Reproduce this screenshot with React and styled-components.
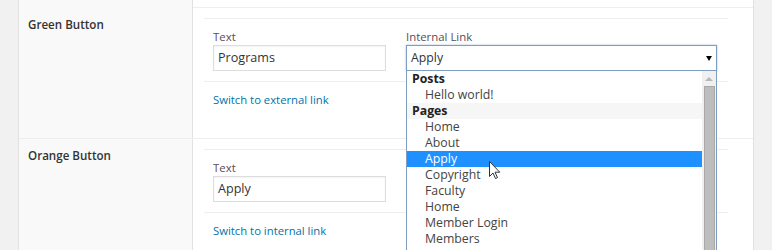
import React from "react";
import styled, { createGlobalStyle } from "styled-components";

const GlobalStyle = createGlobalStyle`
  body {
    margin: 0;
    background: #f1f1f1;
    font-family: "Open Sans", "Liberation Sans", sans-serif;
    color: #444;
  }
`;

const Page = styled.div`
  width: 772px;
  height: 250px;
  overflow: hidden;
  padding: 0 18px;
  box-sizing: border-box;
  position: relative;
`;

const Table = styled.div`
  background: #fff;
  border-left: 1px solid #e1e1e1;
  border-right: 1px solid #e1e1e1;
`;

const Row = styled.div`
  display: grid;
  grid-template-columns: 174px 1fr;
  border-bottom: 1px solid #eee;
  height: ${props => props.height || "auto"};
`;

const RowLabel = styled.div`
  background: #f9f9f9;
  border-right: 1px solid #e1e1e1;
  padding: 8px 9px;
  font-size: 11.6px;
  font-weight: 600;
  line-height: 18px;
  color: #333;
`;

const RowBody = styled.div`
  padding: 10px 25px 20px 11px;
`;

const Fields = styled.div`
  display: flex;
  gap: 2px;
  border-top: 1px solid #eee;
  border-bottom: 1px solid #eee;
`;

const Field = styled.div`
  width: ${props => props.width}px;
  padding: 10px 9px;
  box-sizing: border-box;
  position: relative;
`;

const FieldLabel = styled.div`
  font-size: 11.4px;
  line-height: 16px;
  color: #5a4d57;
`;

const TextInput = styled.div`
  height: 26px;
  box-sizing: border-box;
  border: 1px solid #ddd;
  box-shadow: inset 0 1px 2px rgba(0, 0, 0, 0.05);
  padding: 0 4px;
  font-size: 12.6px;
  line-height: 24px;
  color: #333;
`;

const SelectBox = styled(TextInput)`
  position: relative;
  font-size: 12.3px;
  border-color: #7e9ebf;
  box-shadow: 0 0 2px rgba(91, 157, 217, 0.6);
`;

const SelectArrow = styled.span`
  position: absolute;
  right: 4px;
  top: 10px;
  width: 0;
  height: 0;
  border-left: 3px solid transparent;
  border-right: 3px solid transparent;
  border-top: 5px solid #000;
`;

const LinkRow = styled.div`
  padding: 10px 9px;
  font-size: 11.3px;
  line-height: 16px;
  color: #0073aa;
`;

const Dropdown = styled.div`
  position: absolute;
  left: 9px;
  top: 51px;
  width: 311px;
  height: 200px;
  box-sizing: border-box;
  border: 1px solid #7e9ebf;
  border-bottom: none;
  background: #fff;
  display: flex;
  z-index: 2;
`;

const Options = styled.div`
  flex: 1;
`;

const Option = styled.div`
  height: 16px;
  line-height: 16px;
  font-size: 12.3px;
  padding-left: ${props => (props.group ? "5px" : "18px")};
  font-weight: ${props => (props.group ? 700 : 400)};
  color: ${props => (props.selected ? "#fff" : props.group ? "#222" : "#444")};
  background: ${props =>
    props.selected ? "#1e90ff" : props.shaded ? "#f6f6f6" : "transparent"};
  white-space: nowrap;
`;

const Scrollbar = styled.div`
  width: 14px;
  background: #f0f0f0;
  display: flex;
  flex-direction: column;
  align-items: center;
`;

const ScrollUp = styled.span`
  margin-top: 6px;
  width: 0;
  height: 0;
  border-left: 4px solid transparent;
  border-right: 4px solid transparent;
  border-bottom: 4px solid #b8b8b8;
`;

const ScrollThumb = styled.div`
  margin-top: 5px;
  width: 11px;
  flex: 1;
  box-sizing: border-box;
  background: #bdbdbd;
  border: 1px solid #a9a9a9;
`;

const Cursor = styled.svg`
  position: absolute;
  left: 489px;
  top: 161px;
  z-index: 3;
`;

const options = [
  { label: "Posts", group: true },
  { label: "Hello world!" },
  { label: "Pages", group: true, shaded: true },
  { label: "Home" },
  { label: "About" },
  { label: "Apply", selected: true },
  { label: "Copyright" },
  { label: "Faculty" },
  { label: "Home" },
  { label: "Member Login" },
  { label: "Members" }
];

const App = () => (
  <Page>
    <GlobalStyle />
    <Table>
      <Row height="7px">
        <RowLabel />
        <div />
      </Row>
      <Row>
        <RowLabel>Green Button</RowLabel>
        <RowBody>
          <Fields>
            <Field width={191}>
              <FieldLabel>Text</FieldLabel>
              <TextInput>Programs</TextInput>
            </Field>
            <Field width={329}>
              <FieldLabel>Internal Link</FieldLabel>
              <SelectBox>
                Apply
                <SelectArrow />
              </SelectBox>
              <Dropdown>
                <Options>
                  {options.map((o, i) => (
                    <Option
                      key={i}
                      group={o.group}
                      shaded={o.shaded}
                      selected={o.selected}
                    >
                      {o.label}
                    </Option>
                  ))}
                </Options>
                <Scrollbar>
                  <ScrollUp />
                  <ScrollThumb />
                </Scrollbar>
              </Dropdown>
            </Field>
          </Fields>
          <LinkRow>Switch to external link</LinkRow>
        </RowBody>
      </Row>
      <Row>
        <RowLabel>Orange Button</RowLabel>
        <RowBody>
          <Fields>
            <Field width={191}>
              <FieldLabel>Text</FieldLabel>
              <TextInput>Apply</TextInput>
            </Field>
            <Field width={329}>
              <FieldLabel>External Link</FieldLabel>
              <TextInput />
            </Field>
          </Fields>
          <LinkRow>Switch to internal link</LinkRow>
        </RowBody>
      </Row>
    </Table>
    <Cursor width="12" height="19" viewBox="0 0 12 19">
      <path
        d="M0.5 0.5 L0.5 15.5 L4 12 L6.5 17.5 L8.5 16.6 L6 11.2 L10.8 11.2 Z"
        fill="#fff"
        stroke="#333"
        strokeWidth="1"
        strokeLinejoin="round"
      />
    </Cursor>
  </Page>
);

export default App;
